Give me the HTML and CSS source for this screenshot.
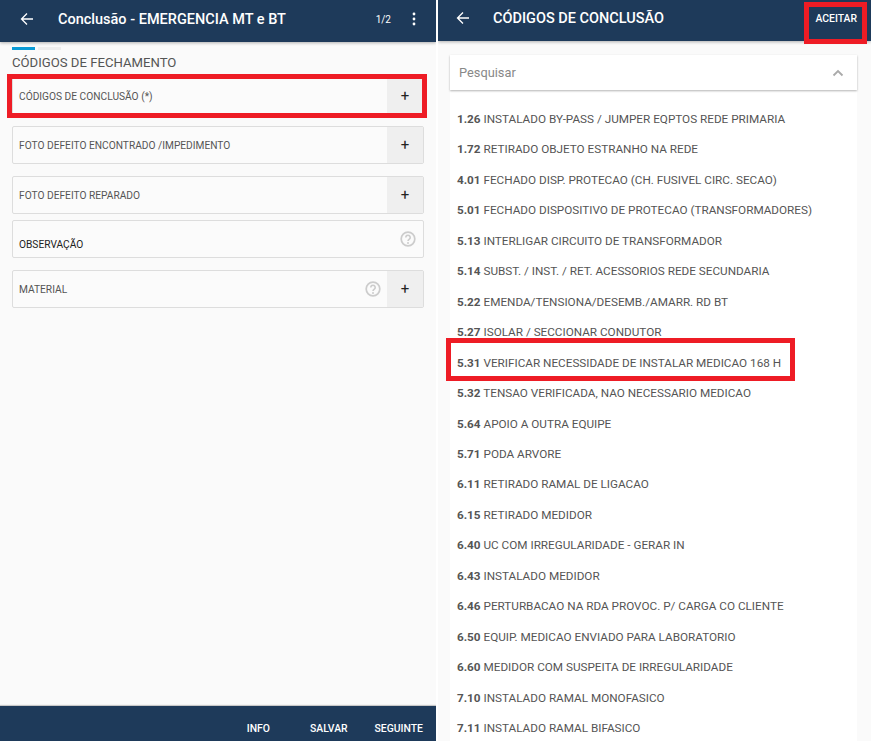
FILE: index.html
```html
<!DOCTYPE html>
<html lang="pt">
<head>
<meta charset="utf-8">
<title>Códigos de conclusão</title>
<link rel="stylesheet" href="styles.css">
</head>
<body>
<div class="screens">
  <section class="screen left">
    <header class="bar bar-left">
      <svg class="back" viewBox="0 0 14 14" width="14" height="14"><path d="M13 7H2M7 1.5 1.5 7 7 12.5" fill="none" stroke="#fff" stroke-width="1.3"/></svg>
      <h1 class="title-left">Conclusão - EMERGENCIA MT e BT</h1>
      <span class="pager">1/2</span>
      <svg class="dots" viewBox="0 0 4 14" width="4" height="14"><circle cx="2" cy="2" r="1.4" fill="#fff"/><circle cx="2" cy="7" r="1.4" fill="#fff"/><circle cx="2" cy="12" r="1.4" fill="#fff"/></svg>
    </header>
    <main class="form">
      <div class="steps"><span class="step on"></span><span class="step"></span></div>
      <h2 class="section">CÓDIGOS DE FECHAMENTO</h2>
      <div class="card c1"><span class="label">CÓDIGOS DE CONCLUSÃO (*)</span><span class="add">+</span><span class="mark mark-card"></span></div>
      <div class="card c2"><span class="label">FOTO DEFEITO ENCONTRADO /IMPEDIMENTO</span><span class="add">+</span></div>
      <div class="card c3"><span class="label">FOTO DEFEITO REPARADO</span><span class="add">+</span></div>
      <div class="card c4"><span class="label dark">OBSERVAÇÃO</span>
        <svg class="help help-solo" viewBox="0 0 16 16" width="16" height="16"><circle cx="8" cy="8" r="6.8" fill="none" stroke="#ccc" stroke-width="1.7"/><path d="M5.8 6.4a2.2 2.2 0 1 1 3.5 1.8C8.5 8.8 8 9.2 8 10.1" fill="none" stroke="#ccc" stroke-width="1.6"/><circle cx="8" cy="12" r="1" fill="#ccc"/></svg>
      </div>
      <div class="card c5"><span class="label">MATERIAL</span>
        <svg class="help" viewBox="0 0 16 16" width="16" height="16"><circle cx="8" cy="8" r="6.8" fill="none" stroke="#ccc" stroke-width="1.7"/><path d="M5.8 6.4a2.2 2.2 0 1 1 3.5 1.8C8.5 8.8 8 9.2 8 10.1" fill="none" stroke="#ccc" stroke-width="1.6"/><circle cx="8" cy="12" r="1" fill="#ccc"/></svg>
        <span class="add">+</span></div>
    </main>
    <footer class="actions"><span class="act-info">INFO</span><span class="act-save">SALVAR</span><span>SEGUINTE</span></footer>
  </section>
  <section class="screen right">
    <header class="bar bar-right">
      <svg class="back" viewBox="0 0 14 14" width="14" height="14"><path d="M13 7H2M7 1.5 1.5 7 7 12.5" fill="none" stroke="#fff" stroke-width="1.3"/></svg>
      <h1 class="title-right">CÓDIGOS DE CONCLUSÃO</h1>
      <span class="accept">ACEITAR</span>
      <span class="mark mark-accept"></span>
    </header>
    <div class="content">
      <div class="search"><span>Pesquisar</span>
        <svg viewBox="0 0 12 8" width="12" height="8"><path d="M1.5 6.5 6 2l4.5 4.5" fill="none" stroke="#aaa" stroke-width="1.8"/></svg>
      </div>
      <ul class="list">
        <li><b>1.26</b> INSTALADO BY-PASS / JUMPER EQPTOS REDE PRIMARIA</li>
        <li><b>1.72</b> RETIRADO OBJETO ESTRANHO NA REDE</li>
        <li><b>4.01</b> FECHADO DISP. PROTECAO (CH. FUSIVEL CIRC. SECAO)</li>
        <li><b>5.01</b> FECHADO DISPOSITIVO DE PROTECAO (TRANSFORMADORES)</li>
        <li><b>5.13</b> INTERLIGAR CIRCUITO DE TRANSFORMADOR</li>
        <li><b>5.14</b> SUBST. / INST. / RET. ACESSORIOS REDE SECUNDARIA</li>
        <li><b>5.22</b> EMENDA/TENSIONA/DESEMB./AMARR. RD BT</li>
        <li><b>5.27</b> ISOLAR / SECCIONAR CONDUTOR</li>
        <li class="picked"><b>5.31</b> VERIFICAR NECESSIDADE DE INSTALAR MEDICAO 168 H<span class="mark mark-row"></span></li>
        <li><b>5.32</b> TENSAO VERIFICADA, NAO NECESSARIO MEDICAO</li>
        <li><b>5.64</b> APOIO A OUTRA EQUIPE</li>
        <li><b>5.71</b> PODA ARVORE</li>
        <li><b>6.11</b> RETIRADO RAMAL DE LIGACAO</li>
        <li><b>6.15</b> RETIRADO MEDIDOR</li>
        <li><b>6.40</b> UC COM IRREGULARIDADE - GERAR IN</li>
        <li><b>6.43</b> INSTALADO MEDIDOR</li>
        <li><b>6.46</b> PERTURBACAO NA RDA PROVOC. P/ CARGA CO CLIENTE</li>
        <li><b>6.50</b> EQUIP. MEDICAO ENVIADO PARA LABORATORIO</li>
        <li><b>6.60</b> MEDIDOR COM SUSPEITA DE IRREGULARIDADE</li>
        <li><b>7.10</b> INSTALADO RAMAL MONOFASICO</li>
        <li><b>7.11</b> INSTALADO RAMAL BIFASICO</li>
      </ul>
    </div>
  </section>
</div>
</body>
</html>
```
FILE: styles.css
```css
* { box-sizing: border-box; }
html, body { margin: 0; height: 100%; background: #fff; overflow: hidden; }
body { font-family: Roboto, "Liberation Sans", sans-serif; color: #555; }
h1, h2, ul { margin: 0; padding: 0; }
.screens { display: grid; grid-template-columns: 436px 433px; gap: 2px; width: 871px; height: 741px; }
.screen { position: relative; display: flex; flex-direction: column; height: 741px; overflow: hidden; background: #fafafa; }
.bar { display: flex; align-items: center; flex: none; position: relative; background: #1e3a5a; color: #fff; box-shadow: 0 1px 3px rgba(0,0,0,.3); z-index: 1; }
.bar-left { height: 42px; padding: 0 0 4px 20px; }
.bar-right { height: 41px; padding: 0 0 5px 18px; }
.title-left { margin-left: 24px; flex: 1; font-size: 14.5px; font-weight: 500; white-space: nowrap; }
.pager { font-size: 10px; margin-right: 21px; }
.dots { margin-right: 20px; }
.title-right { margin-left: 23px; flex: 1; font-size: 14.5px; font-weight: 500; white-space: nowrap; }
.accept { font-size: 10.4px; font-weight: 500; margin-right: 14px; }
.form { flex: 1; padding: 5px 12px 0 12px; }
.steps { display: flex; gap: 3px; }
.step { width: 23px; height: 3px; background: #eee; }
.step.on { background: #0a9bd6; }
.section { margin-top: 5px; font-size: 13.15px; line-height: 15px; font-weight: 400; color: #555; }
.card { position: relative; display: flex; align-items: center; height: 38px; border: 1px solid #ddd; border-radius: 2px; background: #fbfbfb; }
.c1 { margin-top: 7px; }
.c2 { margin-top: 11px; }
.c3 { margin-top: 12px; }
.c4 { margin-top: 6px; }
.c5 { margin-top: 12px; }
.label { flex: 1; padding: 0 0 0 6px; font-size: 10.2px; color: #555; white-space: nowrap; }
.label.dark { color: #222; padding: 11px 0 0 6px; }
.add { align-self: stretch; display: flex; align-items: center; justify-content: center; width: 36px; background: #efefef; color: #222; font-size: 15px; }
.help { margin-right: 6px; flex: none; }
.help-solo { margin: -1px 7px 0 0; }
.actions { display: flex; justify-content: flex-end; align-items: center; flex: none; height: 35px; padding: 10px 13px 0 0; background: #1e3a5a; color: #fff; font-size: 10.4px; font-weight: 500; box-shadow: 0 -1px 1px rgba(0,0,0,.2); }
.act-info { margin-right: 40px; }
.act-save { margin-right: 27px; }
.content { display: flex; flex-direction: column; flex: 1; padding: 14px 14px 0 12px; min-height: 0; }
.search { display: flex; align-items: center; justify-content: space-between; flex: none; height: 35px; padding: 0 13px 0 9px; background: #fff; color: #888; font-size: 12.8px; box-shadow: 0 1px 2px rgba(0,0,0,.3); position: relative; z-index: 1; }
.list { list-style: none; flex: 1; padding-top: 14px; background: #fff; }
.list li { position: relative; height: 30.46px; line-height: 30.46px; padding-left: 7px; font-size: 11.72px; color: #555; white-space: nowrap; }
.list b { font-weight: 700; }
.mark { position: absolute; border: 5px solid #ee1c25; pointer-events: none; }
.mark-card { left: -6px; top: -4px; width: 420px; height: 44px; }
.mark-accept { left: 366px; top: 2px; width: 63px; height: 42px; }
.mark-row { left: -4px; top: -10px; width: 349px; height: 43px; }
```
